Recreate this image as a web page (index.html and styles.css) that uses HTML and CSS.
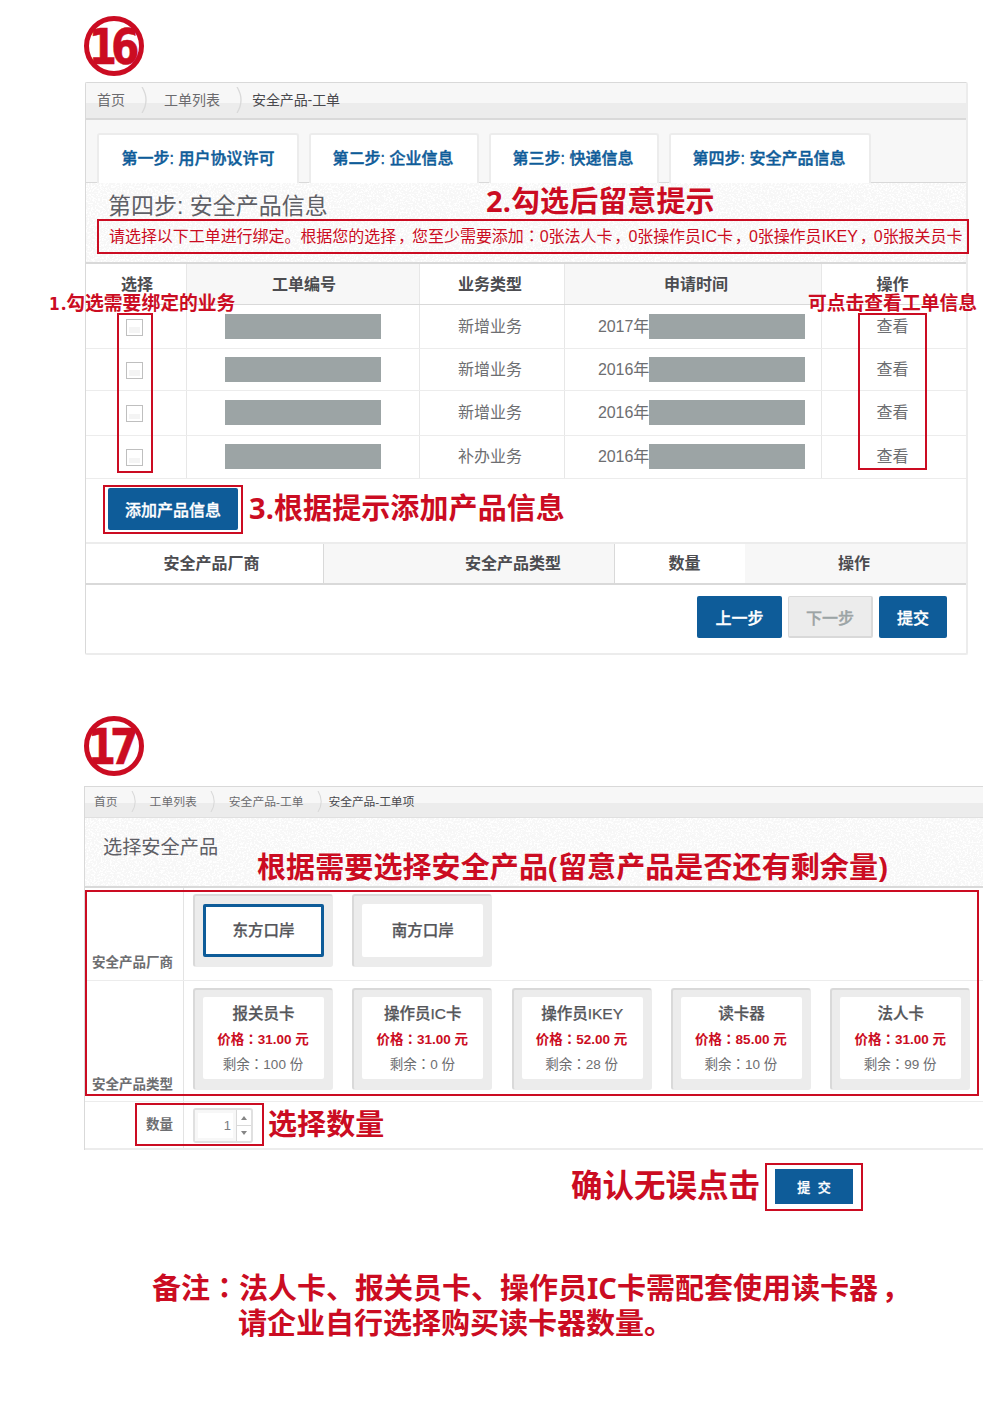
FILE: index.html
```html
<!DOCTYPE html>
<html lang="zh-CN">
<head>
<meta charset="utf-8">
<title>安全产品-工单</title>
<link rel="stylesheet" href="styles.css">
</head>
<body>
<main class="page">
  <svg class="step-no" width="62" height="62" viewBox="0 0 62 62">
    <circle cx="31" cy="31" r="27.5"/>
    <text transform="translate(5.5 49) scale(.82 1)">16</text>
  </svg>

  <section class="panel orders">
    <nav class="crumbs">
      <span>首页</span><svg class="sep" viewBox="0 0 7 26"><path d="M1 0Q9 13 1 26"/></svg>
      <span>工单列表</span><svg class="sep" viewBox="0 0 7 26"><path d="M1 0Q9 13 1 26"/></svg>
      <span class="current">安全产品-工单</span>
    </nav>
    <div class="tabs">
      <a class="tab w1">第一步: 用户协议许可</a>
      <a class="tab w2">第二步: 企业信息</a>
      <a class="tab w3">第三步: 快递信息</a>
      <a class="tab w4">第四步: 安全产品信息</a>
    </div>
    <header class="title noise">
      <h1>第四步: 安全产品信息</h1>
      <p class="hint">请选择以下工单进行绑定。根据您的选择<i class="comma">，</i>您至少需要添加<i class="colon" lang="zh-TW">：</i>0张法人卡<i class="comma">，</i>0张操作员IC卡<i class="comma">，</i>0张操作员IKEY<i class="comma">，</i>0张报关员卡</p>
    </header>
    <div class="table">
      <div class="row head"><b>选择</b><b class="alt">工单编号</b><b>业务类型</b><b class="alt">申请时间</b><b>操作</b></div>
      <div class="row r1"><span><i class="check"></i></span><span><i class="mask"></i></span><span>新增业务</span><span class="date">2017年<i class="mask"></i></span><span>查看</span></div>
      <div class="row r2"><span><i class="check"></i></span><span><i class="mask"></i></span><span>新增业务</span><span class="date">2016年<i class="mask"></i></span><span>查看</span></div>
      <div class="row r3"><span><i class="check"></i></span><span><i class="mask"></i></span><span>新增业务</span><span class="date">2016年<i class="mask"></i></span><span>查看</span></div>
      <div class="row r4"><span><i class="check"></i></span><span><i class="mask"></i></span><span>补办业务</span><span class="date">2016年<i class="mask"></i></span><span>查看</span></div>
    </div>
    <div class="add"><button class="btn add-btn">添加产品信息</button></div>
    <div class="products"><b class="vendor">安全产品厂商</b><b class="alt kind">安全产品类型</b><b class="qty">数量</b><b class="alt op">操作</b></div>
    <footer class="actions">
      <button class="btn">上一步</button><button class="btn off">下一步</button><button class="btn send">提交</button>
    </footer>
  </section>

  <svg class="step-no second" width="62" height="62" viewBox="0 0 62 62">
    <circle cx="31" cy="31" r="27.5"/>
    <text transform="translate(4.5 49) scale(.82 1)">17</text>
  </svg>

  <section class="choose">
    <nav class="crumbs small">
      <span>首页</span><svg class="sep" viewBox="0 0 7 26"><path d="M1 0Q9 13 1 26"/></svg>
      <span>工单列表</span><svg class="sep" viewBox="0 0 7 26"><path d="M1 0Q9 13 1 26"/></svg>
      <span>安全产品-工单</span><svg class="sep" viewBox="0 0 7 26"><path d="M1 0Q9 13 1 26"/></svg>
      <span class="current">安全产品-工单项</span>
    </nav>
    <header class="subtitle noise"><h2>选择安全产品</h2></header>
    <div class="field vendors">
      <label>安全产品厂商</label>
      <div class="cards">
        <div class="card"><div class="face picked"><strong>东方口岸</strong></div></div>
        <div class="card"><div class="face"><strong>南方口岸</strong></div></div>
      </div>
    </div>
    <div class="field kinds">
      <label>安全产品类型</label>
      <div class="cards">
        <div class="card"><div class="face"><strong>报关员卡</strong><em>价格<i class="colon" lang="zh-TW">：</i>31.00 元</em><small>剩余<i class="colon" lang="zh-TW">：</i>100 份</small></div></div>
        <div class="card"><div class="face"><strong>操作员IC卡</strong><em>价格<i class="colon" lang="zh-TW">：</i>31.00 元</em><small>剩余<i class="colon" lang="zh-TW">：</i>0 份</small></div></div>
        <div class="card"><div class="face"><strong>操作员IKEY</strong><em>价格<i class="colon" lang="zh-TW">：</i>52.00 元</em><small>剩余<i class="colon" lang="zh-TW">：</i>28 份</small></div></div>
        <div class="card"><div class="face"><strong>读卡器</strong><em>价格<i class="colon" lang="zh-TW">：</i>85.00 元</em><small>剩余<i class="colon" lang="zh-TW">：</i>10 份</small></div></div>
        <div class="card"><div class="face"><strong>法人卡</strong><em>价格<i class="colon" lang="zh-TW">：</i>31.00 元</em><small>剩余<i class="colon" lang="zh-TW">：</i>99 份</small></div></div>
      </div>
    </div>
    <div class="field amount">
      <label>数量</label>
      <div class="cards"><div class="spinner"><span class="value">1</span><span class="arrows"><i class="up"></i><i class="down"></i></span></div></div>
    </div>
  </section>
  <div class="confirm"><span>确认无误点击</span><div class="ring"><button class="btn">提 交</button></div></div>
  <p class="remark">备注<i class="colon" lang="zh-TW">：</i>法人卡、报关员卡、操作员IC卡需配套使用读卡器<i class="comma">，</i><br><span>请企业自行选择购买读卡器数量。</span></p>

  <div class="box box-hint"></div>
  <div class="box box-check"></div>
  <div class="box box-view"></div>
  <div class="box box-add"></div>
  <div class="box box-choose"></div>
  <div class="box box-amount"></div>
  <div class="note n2">2.勾选后留意提示</div>
  <div class="note n1"><span class="one">1</span>.勾选需要绑定的业务</div>
  <div class="note n-view">可点击查看工单信息</div>
  <div class="note n3">3.根据提示添加产品信息</div>
  <div class="note n4">根据需要选择安全产品(留意产品是否还有剩余量)</div>
  <div class="note n5">选择数量</div>
</main>
</body>
</html>
```
FILE: styles.css
```css
* { box-sizing: border-box; }
body { margin: 0; background: #fff; }
i, em { font-style: normal; }
h1, h2, p { margin: 0; font-weight: 400; }
.page {
  position: relative; width: 1000px; height: 1415px; overflow: hidden;
  padding: 15px 0 0 83px;
  font: 16px/20px "Liberation Sans", "Noto Sans CJK SC", sans-serif;
  color: #6d6e71;
}
.colon { font-family: "Noto Sans CJK TC", sans-serif; line-height: 1; }
.comma { display: inline-block; width: 1em; padding-left: .12em; }

.step-no { display: block; }
.step-no.second { margin-top: 60px; }
.step-no circle { fill: none; stroke: #cb0c22; stroke-width: 5; }
.step-no text {
  font: 700 50px "DejaVu Sans", sans-serif; letter-spacing: -7.5px;
  fill: #cb0c22; stroke: #cb0c22; stroke-width: .5;
}

/* work order panel */
.panel {
  width: 883px; height: 573px; margin: 5px 0 0 2px;
  border: 1px solid #d9d9d9; border-right: 2px solid #ececec; border-bottom: 2px solid #ececec;
  border-radius: 2px;
}
.crumbs {
  display: flex; align-items: center; height: 37px; padding: 0 0 1px 11px;
  font-size: 14px; color: #6b6b6e;
  background: linear-gradient(#f7f7f7 20px, #ececec 20px);
  border-bottom: 2px solid #d9d9d9;
}
.crumbs .current { margin-left: -7px; color: #48484c; letter-spacing: -.1px; }
.sep { width: 7px; height: 26px; margin: 0 16px; fill: none; stroke: #d9d9d9; stroke-width: 1.3; }
.tabs {
  display: flex; gap: 10px; height: 63px; padding: 13px 0 0 11px;
  background: #f7f7f7; border-bottom: 1px solid #d9d9d9;
}
.tab {
  display: flex; align-items: center; justify-content: center; height: 50px;
  background: #fff; border: 2px solid #ececec; border-bottom: 0; border-radius: 3px 3px 0 0;
  color: #0e5c99; font-weight: 500; white-space: nowrap; -webkit-text-stroke: .4px #0e5c99;
}
.w1 { width: 202px; }
.w2 { width: 170px; }
.w3 { width: 170px; }
.w4 { width: 202px; }
.w2, .w3, .w4 { padding-right: 2px; }
.noise {
  background-color: #f7f7f7;
  background-image: url("data:image/svg+xml,%3Csvg xmlns='http://www.w3.org/2000/svg' width='160' height='80'%3E%3Cfilter id='n' x='0' y='0' width='100%25' height='100%25'%3E%3CfeTurbulence type='fractalNoise' baseFrequency='.55' numOctaves='3' stitchTiles='stitch'/%3E%3CfeColorMatrix values='0 0 0 0 1 0 0 0 0 1 0 0 0 0 1 9 0 0 0 -4.5'/%3E%3C/filter%3E%3Crect width='160' height='80' filter='url(%23n)'/%3E%3C/svg%3E");
}
.title { height: 81px; padding: 10px 0 0 23px; border-bottom: 2px solid #d9d9d9; }
.title h1 { height: 27px; margin-left: -1px; font-size: 23px; line-height: 27px; color: #5f6066; }
.hint { margin-top: 7px; line-height: 20px; color: #cb0c22; white-space: nowrap; letter-spacing: -.05px; }

.row { display: grid; grid-template-columns: 101px 233px 145px 257px 144px; border-bottom: 1px solid #ececec; }
.row > * {
  display: flex; align-items: center; justify-content: center; border-right: 1px solid #e7e7e7;
}
.row > :last-child { border-right: 0; padding-right: 3px; }
.row > :nth-child(3) { padding-right: 4px; }
.head { height: 41px; border-bottom-color: #d9d9d9; }
.head > * { padding-top: 2px; }
.head > :first-child, .head > :nth-child(2) { padding-left: 2px; }
.row b, .products b { color: #4c4c50; font-weight: 700; }
.alt { background: #f7f7f7; }
.head > :nth-child(4) { padding-left: 6px; }
.r1 { height: 44px; }
.r2 { height: 42px; }
.r3 { height: 45px; }
.r4 { height: 43px; }
.mask { width: 156px; height: 25px; background: #9ca4a5; flex: none; }
.r2 .mask, .r3 .mask, .r4 .mask { margin-bottom: 1px; }
.row .date { justify-content: flex-start; padding-left: 33px; letter-spacing: -.1px; }
.row > span:first-child { padding-right: 4px; }
.check {
  width: 17px; height: 17px; margin-top: 1px; border: 1px solid #bfbfbf; box-shadow: inset 0 0 0 2px #fff;
  background: linear-gradient(#fff 50%, #f4f4f4 50%);
}
.add { height: 63px; padding: 9px 0 0 22px; }
.btn {
  width: 85px; height: 42px; padding: 0; border: 0; border-radius: 2px;
  background: #0e5c99; color: #fff; font: 500 16px "Liberation Sans", "Noto Sans CJK SC", sans-serif;
  -webkit-text-stroke: .3px;
}
.add-btn { width: 130px; }
.products {
  display: grid; grid-template-columns: 238px 291px 130px 1fr; height: 43px;
  border-top: 2px solid #ececec; border-bottom: 2px solid #d9d9d9;
}
.products b { display: flex; align-items: center; justify-content: center; }
.products .vendor { padding-left: 14px; border-right: 1px solid #d9d9d9; }
.products .kind { padding-left: 88px; border-right: 1px solid #d9d9d9; }
.products .qty { padding-left: 9px; }
.products .op { padding-right: 3px; }
.actions { display: flex; justify-content: flex-end; gap: 6px; padding: 11px 19px 0 0; }
.btn.off { background: #ececec; color: #9ca4a5; border: 1px solid #d9d9d9; border-width: 1px 2px 2px 1px; }
.btn.send { width: 68px; }

/* product picker */
.choose { width: 899px; margin: 9px 0 0 1px; border-left: 1px solid #d9d9d9; border-top: 1px solid #d9d9d9; }
.crumbs.small {
  height: 31px; padding: 0 0 1px 9px; font-size: 11.8px;
  background: linear-gradient(#f7f7f7 16px, #ececec 16px); border-bottom: 1px solid #e0e0e0;
}
.small .sep { width: 6px; height: 21px; margin: 0 13px; }
.subtitle { height: 70px; padding: 18px 0 0 18px; border-bottom: 2px solid #d9d9d9; }
.subtitle h2 { font-size: 19.2px; line-height: 24px; color: #5f6066; }
.field { display: grid; grid-template-columns: 99px 1fr; border-bottom: 1px solid #ececec; }
.field label {
  display: flex; align-items: flex-end; justify-content: flex-end; padding-right: 10px;
  border-right: 1px solid #e3e3e3; font-size: 13.5px; font-weight: 700; color: #6d6e71; white-space: nowrap;
}
.cards { display: flex; gap: 19.3px; padding: 6px 0 0 9px; }
.card {
  width: 140px; padding: 8px 8px 9px 8px; flex: none; background: #ececec;
  border: 1px solid #ececec; border-top: 2px solid #d9d9d9; border-left: 2px solid #d9d9d9; border-radius: 3px;
}
.face {
  display: flex; flex-direction: column; align-items: center; height: 100%;
  background: #fff; border-radius: 2px; white-space: nowrap;
}
.face strong { font-weight: 500; font-size: 15.5px; line-height: 20px; color: #55565a; -webkit-text-stroke: .25px; }
.face em { height: 20px; margin-top: 6px; font-size: 13.5px; line-height: 20px; font-weight: 700; color: #cb0c22; }
.face small { height: 20px; margin-top: 5px; font-size: 13.5px; line-height: 20px; }
.face em, .face small { margin-right: 1px; }
.vendors { height: 93px; }
.vendors .card { height: 73px; }
.vendors .face { justify-content: center; }
.face.picked { border: 3px solid #0e5c99; }
.vendors label { padding-bottom: 7px; }
.kinds { height: 121px; }
.kinds .cards { padding-top: 7px; }
.kinds .card { height: 102px; padding-top: 7px; padding-bottom: 10px; }
.kinds .face { padding-top: 7px; }
.kinds label { padding-bottom: 6px; }
.amount { height: 48px; border-bottom: 2px solid #ececec; }
.amount label { align-items: center; }
.spinner {
  display: flex; width: 60px; height: 35px; border: 2px solid #e0e0e0; border-radius: 3px; background: #fff;
}
.value {
  width: 42px; padding-right: 5px; text-align: right; font-size: 13px; line-height: 32px; color: #7c7c80;
  border-right: 1px solid #d9d9d9; box-shadow: inset 0 0 0 3px #f7f7f7;
}
.arrows {
  flex: 1; display: grid; grid-template-rows: 1fr 1fr; justify-items: center; align-items: center;
  background: linear-gradient(#d9d9d9, #d9d9d9) 0 50% / 100% 1px no-repeat;
}
.up { border: 3px solid transparent; border-top: 0; border-bottom: 4px solid #858585; }
.down { border: 3px solid transparent; border-bottom: 0; border-top: 4px solid #858585; }

.confirm { display: flex; align-items: center; gap: 5px; height: 49px; margin: 12px 0 0 488px; }
.confirm span, .note, .remark {
  font-family: "Noto Sans", "Noto Sans CJK SC", sans-serif; font-weight: 700; color: #cb0c22; white-space: nowrap;
}
.confirm span { padding-bottom: 4px; font-size: 31.5px; line-height: 40px; }
.ring { width: 98px; height: 48px; border: 2px solid #cb0c22; padding: 4px 8px; }
.ring .btn { display: block; width: 78px; height: 35px; border-radius: 0; font-size: 13px; word-spacing: 4px; }
.remark { margin: 59px 0 0 69px; font-size: 29px; line-height: 35px; }
.remark span { margin-left: 86px; }

/* red call-outs laid over the screens */
.box { position: absolute; border: 2px solid #cb0c22; }
.box-hint { left: 97px; top: 219px; width: 872px; height: 35px; }
.box-check { left: 117px; top: 313px; width: 36px; height: 160px; }
.box-view { left: 858px; top: 313px; width: 69px; height: 157px; }
.box-add { left: 103px; top: 485px; width: 140px; height: 49px; }
.box-choose { left: 85px; top: 890px; width: 894px; height: 206px; }
.box-amount { left: 135px; top: 1103px; width: 129px; height: 43px; }
.note { position: absolute; font-size: 29px; line-height: 36px; letter-spacing: .1px; }
.n2 { left: 486px; top: 183px; }
.n1 { left: 49px; top: 291px; font-size: 18.8px; line-height: 24px; letter-spacing: 0; }
.one { display: inline-block; width: 12px; font: 700 17px/24px "DejaVu Sans Condensed", "DejaVu Sans", sans-serif; }
.n-view { left: 808px; top: 291px; font-size: 18.8px; line-height: 24px; letter-spacing: 0; }
.n3 { left: 249px; top: 490px; }
.n4 { left: 257px; top: 849px; }
.n5 { left: 268px; top: 1106px; }
```
